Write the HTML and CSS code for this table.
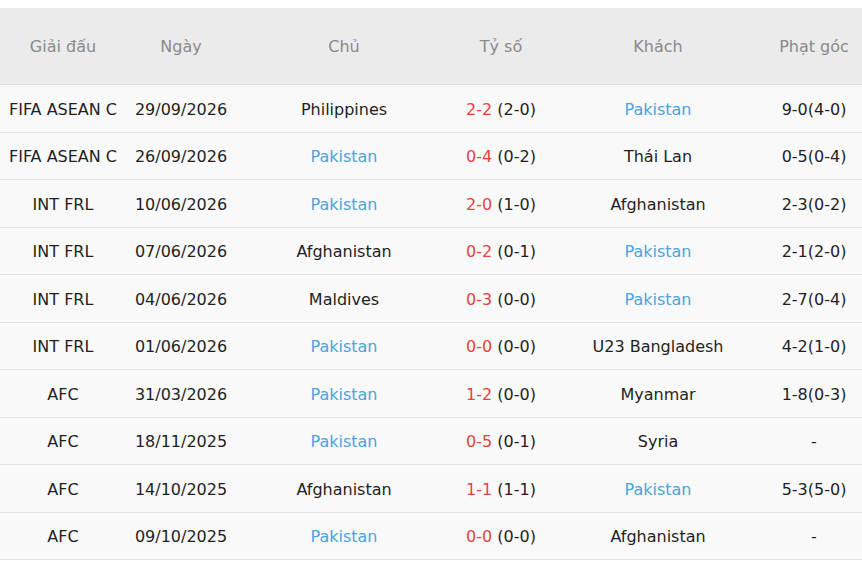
FILE: index.html
```html
<!DOCTYPE html>
<html lang="vi">
<head>
<meta charset="utf-8">
<link rel="stylesheet" href="styles.css">
</head>
<body>
<table class="matches">
  <colgroup>
    <col class="c-league"><col class="c-date"><col class="c-home"><col class="c-score"><col class="c-away"><col class="c-corner">
  </colgroup>
  <thead>
    <tr><th>Giải đấu</th><th>Ngày</th><th>Chủ</th><th>Tỷ số</th><th>Khách</th><th>Phạt góc</th></tr>
  </thead>
  <tbody>
    <tr><td>FIFA ASEAN C</td><td>29/09/2026</td><td>Philippines</td><td><span class="ft">2-2</span> (2-0)</td><td class="team">Pakistan</td><td>9-0(4-0)</td></tr>
    <tr><td>FIFA ASEAN C</td><td>26/09/2026</td><td class="team">Pakistan</td><td><span class="ft">0-4</span> (0-2)</td><td>Thái Lan</td><td>0-5(0-4)</td></tr>
    <tr><td>INT FRL</td><td>10/06/2026</td><td class="team">Pakistan</td><td><span class="ft">2-0</span> (1-0)</td><td>Afghanistan</td><td>2-3(0-2)</td></tr>
    <tr><td>INT FRL</td><td>07/06/2026</td><td>Afghanistan</td><td><span class="ft">0-2</span> (0-1)</td><td class="team">Pakistan</td><td>2-1(2-0)</td></tr>
    <tr><td>INT FRL</td><td>04/06/2026</td><td>Maldives</td><td><span class="ft">0-3</span> (0-0)</td><td class="team">Pakistan</td><td>2-7(0-4)</td></tr>
    <tr><td>INT FRL</td><td>01/06/2026</td><td class="team">Pakistan</td><td><span class="ft">0-0</span> (0-0)</td><td>U23 Bangladesh</td><td>4-2(1-0)</td></tr>
    <tr><td>AFC</td><td>31/03/2026</td><td class="team">Pakistan</td><td><span class="ft">1-2</span> (0-0)</td><td>Myanmar</td><td>1-8(0-3)</td></tr>
    <tr><td>AFC</td><td>18/11/2025</td><td class="team">Pakistan</td><td><span class="ft">0-5</span> (0-1)</td><td>Syria</td><td>-</td></tr>
    <tr><td>AFC</td><td>14/10/2025</td><td>Afghanistan</td><td><span class="ft">1-1</span> (1-1)</td><td class="team">Pakistan</td><td>5-3(5-0)</td></tr>
    <tr><td>AFC</td><td>09/10/2025</td><td class="team">Pakistan</td><td><span class="ft">0-0</span> (0-0)</td><td>Afghanistan</td><td>-</td></tr>
  </tbody>
</table>
</body>
</html>
```
FILE: styles.css
```css
html, body {
  margin: 0;
  padding: 0;
  background: #ffffff;
}
body {
  padding-top: 8px;
  font-family: "DejaVu Sans", Verdana, sans-serif;
  font-size: 16px;
  color: #1f1f1f;
}
.matches {
  width: 862px;
  border-collapse: collapse;
  table-layout: fixed;
}
.c-league { width: 126px; }
.c-date { width: 110px; }
.c-home { width: 216px; }
.c-score { width: 98px; }
.c-away { width: 216px; }
.c-corner { width: 96px; }

.matches th {
  height: 75px;
  padding: 1px 0 0;
  background: #ebebeb;
  color: #8a8a8a;
  font-weight: normal;
  text-align: center;
  border-bottom: 1px solid #dcdcdc;
}
.matches td {
  height: 45px;
  padding: 1.5px 0 0;
  text-align: center;
  background: #f9f9f9;
  border-bottom: 1px solid #e2e2e2;
  white-space: nowrap;
}
.team { color: #4ba3df; }
.ft { color: #e8413f; }
```
